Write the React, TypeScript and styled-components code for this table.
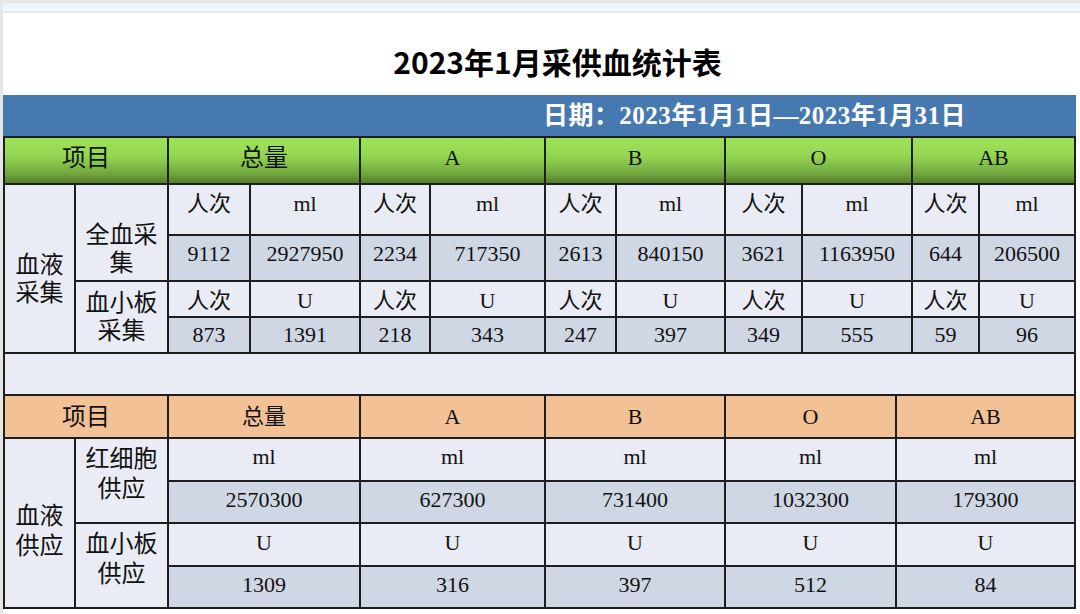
import React from 'react';
import styled, { createGlobalStyle, css } from 'styled-components';

const GlobalStyle = createGlobalStyle`
  html, body { margin: 0; padding: 0; background: #e6e6e6; }
  body { font-family: "Liberation Serif", "Noto Sans CJK SC", serif; color: #111; }
`;

const Sheet = styled.div`
  margin: 3px 0 0 3px;
  min-height: 611px;
  width: 1077px;
  background: #fff;
  display: flex;
  flex-direction: column;
`;

const TopStrip = styled.div`
  height: 8px;
  background: linear-gradient(to bottom, #edf3fb, #f6f9fe);
  border-bottom: 2px solid #dfebfa;
`;

const TitleBar = styled.h1`
  margin: 0;
  width: 1073px;
  height: 82px;
  box-sizing: border-box;
  padding: 28px 0 0 36px;
  text-align: center;
  color: #000;
  font: 700 30px/40px "Noto Sans CJK SC", sans-serif;
`;

const DateBand = styled.div`
  width: 1073px;
  height: 41px;
  box-sizing: border-box;
  padding-left: 540px;
  display: flex;
  align-items: center;
  background: #4779b1;
  color: #fff;
  letter-spacing: 0.45px;
  font: 700 25px/1 "Liberation Serif", "Noto Sans CJK SC", serif;
`;

const Grid = styled.div<{ $cols: number[]; $rows: number[]; $open?: boolean }>`
  display: grid;
  width: max-content;
  grid-template-columns: ${p => p.$cols.map(c => `${c}px`).join(' ')};
  grid-template-rows: ${p => p.$rows.map(r => `${r}px`).join(' ')};
  gap: 2px;
  padding: ${p => (p.$open ? '2px 2px 0' : '2px')};
  background: #1e1e1e;
`;

type Pos = { $cs?: number; $rs?: number; $pt?: number; $pb?: number; $size?: number; $lh?: number };

const Cell = styled.div<Pos>`
  grid-column: span ${p => p.$cs ?? 1};
  grid-row: span ${p => p.$rs ?? 1};
  box-sizing: border-box;
  display: flex;
  flex-direction: column;
  justify-content: center;
  align-items: center;
  text-align: center;
  padding-top: ${p => p.$pt ?? 0}px;
  padding-bottom: ${p => p.$pb ?? 0}px;
  font-size: ${p => p.$size ?? 22}px;
  line-height: ${p => p.$lh ?? 28}px;
  color: #111;
  overflow: hidden;
`;

const headTones = {
  green: css`
    background: linear-gradient(to bottom, #9fe25a 0%, #93d652 40%, #77ad41 75%, #557f2c 100%);
  `,
  orange: css`
    background: #f2c196;
  `,
};

const HeaderCell = styled(Cell)<{ $tone: 'green' | 'orange' }>`
  ${p => headTones[p.$tone]}
`;

const UnitCell = styled(Cell)`
  background: #e9ecf4;
`;

const TopUnitCell = styled(UnitCell)`
  justify-content: flex-start;
`;

const ValueCell = styled(Cell)`
  background: #cfd7e4;
`;

const LabelCell = styled(Cell)`
  background: #e9ecf4;
  font-size: 24px;
  padding-left: 2px;
  padding-right: 2px;
`;

const BlankRow = styled.div`
  grid-column: 1 / -1;
  background: #e9ecf4;
`;

const groups = ['A', 'B', 'O', 'AB'];

const wholeBlood: [number, number][] = [
  [9112, 2927950],
  [2234, 717350],
  [2613, 840150],
  [3621, 1163950],
  [644, 206500],
];
const plateletCollect: [number, number][] = [
  [873, 1391],
  [218, 343],
  [247, 397],
  [349, 555],
  [59, 96],
];
const redSupply = [2570300, 627300, 731400, 1032300, 179300];
const plateletSupply = [1309, 316, 397, 512, 84];

const topCols = [69, 91, 80, 108, 68, 113, 69, 107, 75, 108, 65, 94];
const topRows = [45, 49, 44, 34, 34, 40];
const botCols = [69, 91, 190, 183, 178, 169, 177];
const botRows = [41, 41, 40, 41, 40];

export default function App() {
  return (
    <>
      <GlobalStyle />
      <Sheet>
        <TopStrip />
        <TitleBar>2023年1月采供血统计表</TitleBar>
        <DateBand>日期：2023年1月1日—2023年1月31日</DateBand>

        <Grid $cols={topCols} $rows={topRows} $open>
          <HeaderCell $tone="green" $cs={2} $size={24} $pb={5}>项目</HeaderCell>
          <HeaderCell $tone="green" $cs={2} $size={24} $pb={5}>总量</HeaderCell>
          {groups.map(g => (
            <HeaderCell key={g} $tone="green" $cs={2} $pb={5}>{g}</HeaderCell>
          ))}

          <LabelCell $rs={4} $pt={21}>血液采集</LabelCell>
          <LabelCell $rs={2} $pt={32}>全血采集</LabelCell>
          {wholeBlood.map((_, i) => (
            <React.Fragment key={`wu${i}`}>
              <TopUnitCell $pt={5}>人次</TopUnitCell>
              <TopUnitCell $pt={5}>ml</TopUnitCell>
            </React.Fragment>
          ))}
          {wholeBlood.map(([n, v], i) => (
            <React.Fragment key={`wv${i}`}>
              <ValueCell $pb={9}>{n}</ValueCell>
              <ValueCell $pb={9}>{v}</ValueCell>
            </React.Fragment>
          ))}

          <LabelCell $rs={2}>血小板采集</LabelCell>
          {plateletCollect.map((_, i) => (
            <React.Fragment key={`pu${i}`}>
              <UnitCell $pt={4}>人次</UnitCell>
              <UnitCell $pt={4}>U</UnitCell>
            </React.Fragment>
          ))}
          {plateletCollect.map(([n, v], i) => (
            <React.Fragment key={`pv${i}`}>
              <ValueCell>{n}</ValueCell>
              <ValueCell>{v}</ValueCell>
            </React.Fragment>
          ))}

          <BlankRow />
        </Grid>

        <Grid $cols={botCols} $rows={botRows}>
          <HeaderCell $tone="orange" $cs={2} $size={24}>项目</HeaderCell>
          <HeaderCell $tone="orange">总量</HeaderCell>
          {groups.map(g => (
            <HeaderCell key={g} $tone="orange">{g}</HeaderCell>
          ))}

          <LabelCell $rs={4} $pt={16} $lh={30}>血液供应</LabelCell>
          <LabelCell $rs={2} $pb={13} $lh={30}>红细胞供应</LabelCell>
          {redSupply.map((_, i) => (
            <UnitCell key={`ru${i}`} $pb={5}>ml</UnitCell>
          ))}
          {redSupply.map((v, i) => (
            <ValueCell key={`rv${i}`} $pb={5}>{v}</ValueCell>
          ))}

          <LabelCell $rs={2} $pb={14} $lh={30}>血小板供应</LabelCell>
          {plateletSupply.map((_, i) => (
            <UnitCell key={`su${i}`} $pb={4}>U</UnitCell>
          ))}
          {plateletSupply.map((v, i) => (
            <ValueCell key={`sv${i}`} $pb={5}>{v}</ValueCell>
          ))}
        </Grid>
      </Sheet>
    </>
  );
}
